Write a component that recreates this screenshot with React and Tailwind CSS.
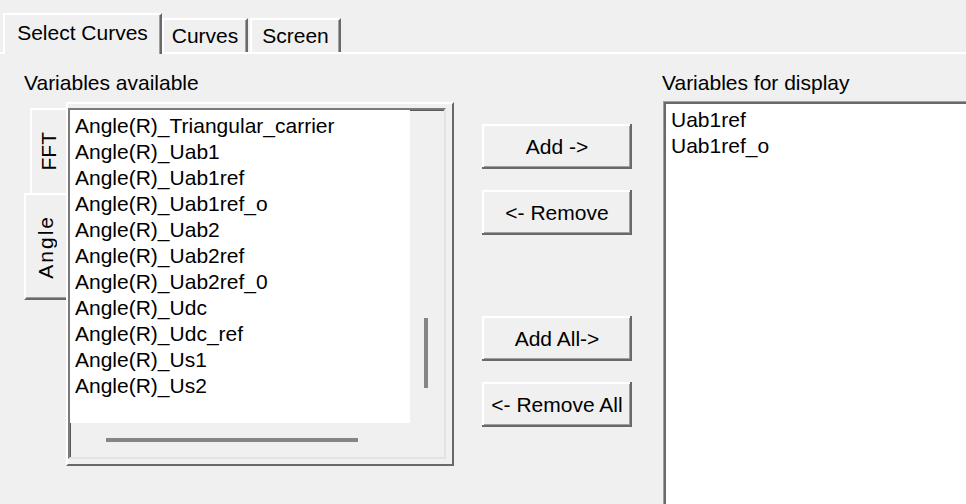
import React from 'react';

const available = [
  'Angle(R)_Triangular_carrier',
  'Angle(R)_Uab1',
  'Angle(R)_Uab1ref',
  'Angle(R)_Uab1ref_o',
  'Angle(R)_Uab2',
  'Angle(R)_Uab2ref',
  'Angle(R)_Uab2ref_0',
  'Angle(R)_Udc',
  'Angle(R)_Udc_ref',
  'Angle(R)_Us1',
  'Angle(R)_Us2',
];

const selected = ['Uab1ref', 'Uab1ref_o'];

const btn =
  'flex h-[45px] w-[150px] items-center justify-center bg-[#f0f0f0] shadow-[inset_-2px_-2px_0_#696969,inset_2px_2px_0_#ffffff,inset_-3px_-3px_0_#a0a0a0]';

const Button = ({ className = '', children }) => (
  <div className={`${btn} ${className}`}>{children}</div>
);

const App = () => {
  return (
    <div className="h-[504px] w-[966px] overflow-hidden bg-[#f0f0f0] font-['Liberation_Sans',Arial,sans-serif] text-[21px] leading-[26px] text-black">
      {/* Tabs */}
      <div className="flex h-[52px] items-end pl-[3px]">
        <div className="relative z-10 -mb-[2px] flex h-[41px] w-[159px] items-center justify-center border-l-2 border-r-2 border-t-2 border-white border-r-[#696969] bg-[#f0f0f0] pb-[3px] shadow-[inset_-1px_0_0_#a0a0a0]">
          Select Curves
        </div>
        <div className="flex h-[34px] w-[86px] items-center justify-center border-l-2 border-r-2 border-t-2 border-white border-r-[#696969] shadow-[inset_-1px_0_0_#a0a0a0]">
          Curves
        </div>
        <div className="ml-[2px] flex h-[34px] w-[91px] items-center justify-center border-l-2 border-r-2 border-t-2 border-white border-r-[#696969] shadow-[inset_-1px_0_0_#a0a0a0]">
          Screen
        </div>
      </div>

      {/* Panel */}
      <div className="flex border-t-2 border-white pl-[23px] pt-4">
        {/* Variables available */}
        <div className="flex flex-col">
          <div className="pl-px">Variables available</div>
          <div className="mt-[6px] flex">
            <div className="flex w-[43px] flex-col">
              <div className="ml-[7px] mt-[6px] flex h-[85px] items-center justify-center border-l-2 border-t-2 border-white">
                <span className="rotate-180 [writing-mode:vertical-rl]">FFT</span>
              </div>
              <div className="ml-px flex h-[107px] items-center justify-center border-b-2 border-l-2 border-t-2 border-white border-b-[#696969] shadow-[inset_0_-1px_0_#a0a0a0]">
                <span className="rotate-180 tracking-[2px] [writing-mode:vertical-rl]">Angle</span>
              </div>
            </div>
            <div className="h-[364px] w-[388px] border-2 border-white border-b-[#696969] border-r-[#696969] pb-[5px] pr-[6px] pt-[4px]">
              <div className="h-full border-2 border-[#e3e3e3] border-l-[#7a7a7a] border-t-[#7a7a7a] shadow-[inset_1px_1px_0_#5a5a5a]">
                <div className="grid grid-cols-[340px_34px] grid-rows-[313px_34px]">
                  <div className="bg-white pl-[5px] pt-[3px]">
                    {available.map((v) => (
                      <div key={v} className="whitespace-nowrap">
                        {v}
                      </div>
                    ))}
                  </div>
                  <div className="pl-[14px] pt-[208px]">
                    <div className="h-[70px] w-[4px] bg-[#858585]" />
                  </div>
                  <div className="pl-[36px] pt-[15px]">
                    <div className="h-[4px] w-[252px] bg-[#858585]" />
                  </div>
                  <div />
                </div>
              </div>
            </div>
          </div>
        </div>

        {/* Buttons */}
        <div className="ml-[28px] flex flex-col pt-[54px]">
          <Button>Add -&gt;</Button>
          <Button className="mt-[21px]">&lt;- Remove</Button>
          <Button className="mt-[81px]">Add All-&gt;</Button>
          <Button className="mt-[21px]">&lt;- Remove All</Button>
        </div>

        {/* Variables for display */}
        <div className="ml-[30px] flex flex-col">
          <div>Variables for display</div>
          <div className="ml-px mt-[5px] h-[420px] w-[400px] border-l border-t border-[#a0a0a0] bg-white pl-[7px] pt-[5px] shadow-[inset_2px_2px_0_#696969]">
            {selected.map((v) => (
              <div key={v}>{v}</div>
            ))}
          </div>
        </div>
      </div>
    </div>
  );
};

export default App;
